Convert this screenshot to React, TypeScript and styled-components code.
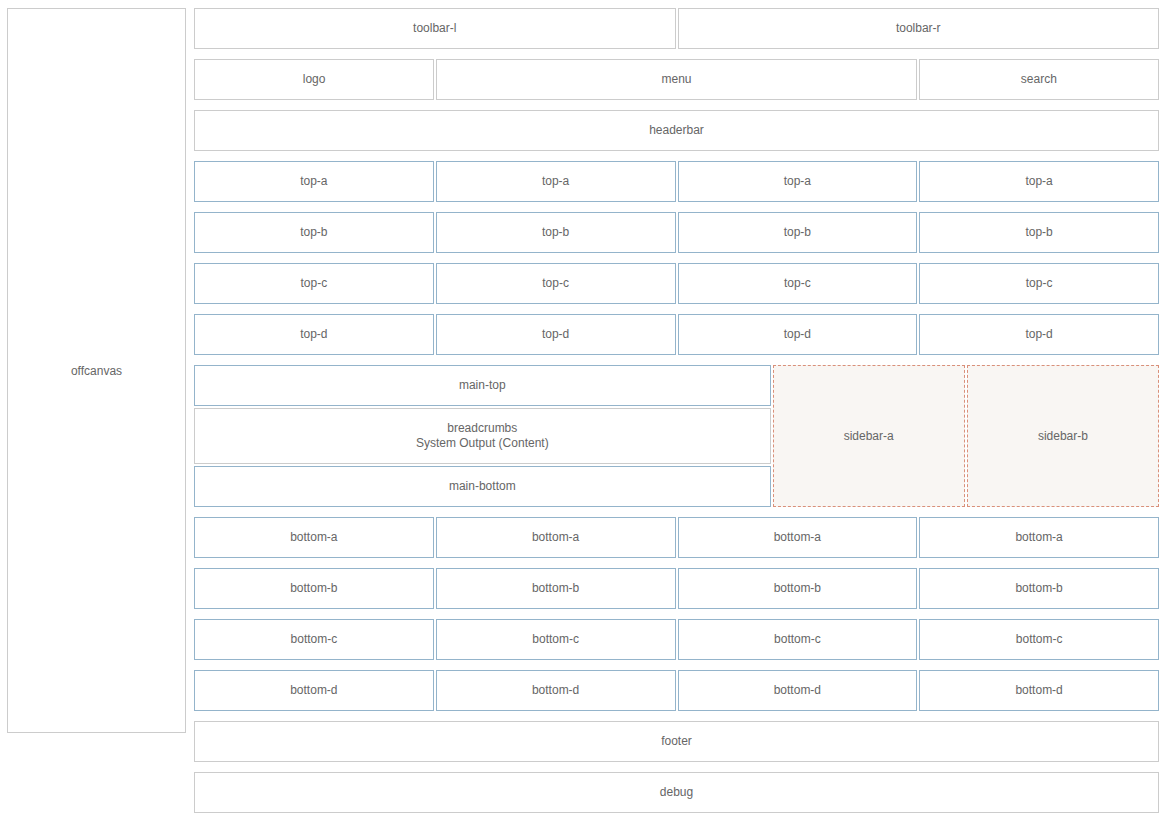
import React from 'react';
import styled, { createGlobalStyle } from 'styled-components';

const Global = createGlobalStyle`
  body {
    margin: 8px 6px 8px 7px;
    font-family: "Liberation Sans", Arial, sans-serif;
    font-size: 12px;
    color: #666;
    background: #fff;
  }
`;

const Page = styled.div`
  display: flex;
  gap: 8px;
  align-items: flex-start;
`;

const Offcanvas = styled.div`
  width: 179px;
  height: 725px;
  flex: none;
  box-sizing: border-box;
  border: 1px solid #ccc;
  display: flex;
  align-items: center;
  justify-content: center;
`;

const Main = styled.div`
  flex: 1;
  display: flex;
  flex-direction: column;
  gap: 10px;
`;

const Row = styled.div<{ $cols: string }>`
  display: grid;
  grid-template-columns: ${(p) => p.$cols};
  gap: 2px;
`;

const Cell = styled.div<{ $tone?: 'gray' | 'blue' | 'side'; $h?: number }>`
  box-sizing: border-box;
  height: ${(p) => p.$h ?? 41}px;
  border: 1px ${(p) => (p.$tone === 'side' ? 'dashed' : 'solid')}
    ${(p) => (p.$tone === 'blue' ? '#94b4cb' : p.$tone === 'side' ? '#d9907a' : '#ccc')};
  background: ${(p) => (p.$tone === 'side' ? '#f9f6f3' : '#fff')};
  display: flex;
  align-items: center;
  justify-content: center;
  text-align: center;
  line-height: 15px;
`;

const MainCol = styled.div`
  display: flex;
  flex-direction: column;
  gap: 2px;
`;

const Quad = ({ name }: { name: string }) => (
  <Row $cols="1fr 1fr 1fr 1fr">
    {[0, 1, 2, 3].map((i) => (
      <Cell key={i} $tone="blue">{name}</Cell>
    ))}
  </Row>
);

export default function App() {
  return (
    <>
      <Global />
      <Page>
        <Offcanvas>offcanvas</Offcanvas>
        <Main>
          <Row $cols="1fr 1fr">
            <Cell>toolbar-l</Cell>
            <Cell>toolbar-r</Cell>
          </Row>
          <Row $cols="1fr 2fr 1fr">
            <Cell>logo</Cell>
            <Cell>menu</Cell>
            <Cell>search</Cell>
          </Row>
          <Row $cols="1fr">
            <Cell>headerbar</Cell>
          </Row>
          {['top-a', 'top-b', 'top-c', 'top-d'].map((n) => (
            <Quad key={n} name={n} />
          ))}
          <Row $cols="3fr 1fr 1fr">
            <MainCol>
              <Cell $tone="blue">main-top</Cell>
              <Cell $h={56}>
                breadcrumbs
                <br />
                System Output (Content)
              </Cell>
              <Cell $tone="blue">main-bottom</Cell>
            </MainCol>
            <Cell $tone="side" $h={142}>sidebar-a</Cell>
            <Cell $tone="side" $h={142}>sidebar-b</Cell>
          </Row>
          {['bottom-a', 'bottom-b', 'bottom-c', 'bottom-d'].map((n) => (
            <Quad key={n} name={n} />
          ))}
          <Row $cols="1fr">
            <Cell>footer</Cell>
          </Row>
          <Row $cols="1fr">
            <Cell>debug</Cell>
          </Row>
        </Main>
      </Page>
    </>
  );
}
